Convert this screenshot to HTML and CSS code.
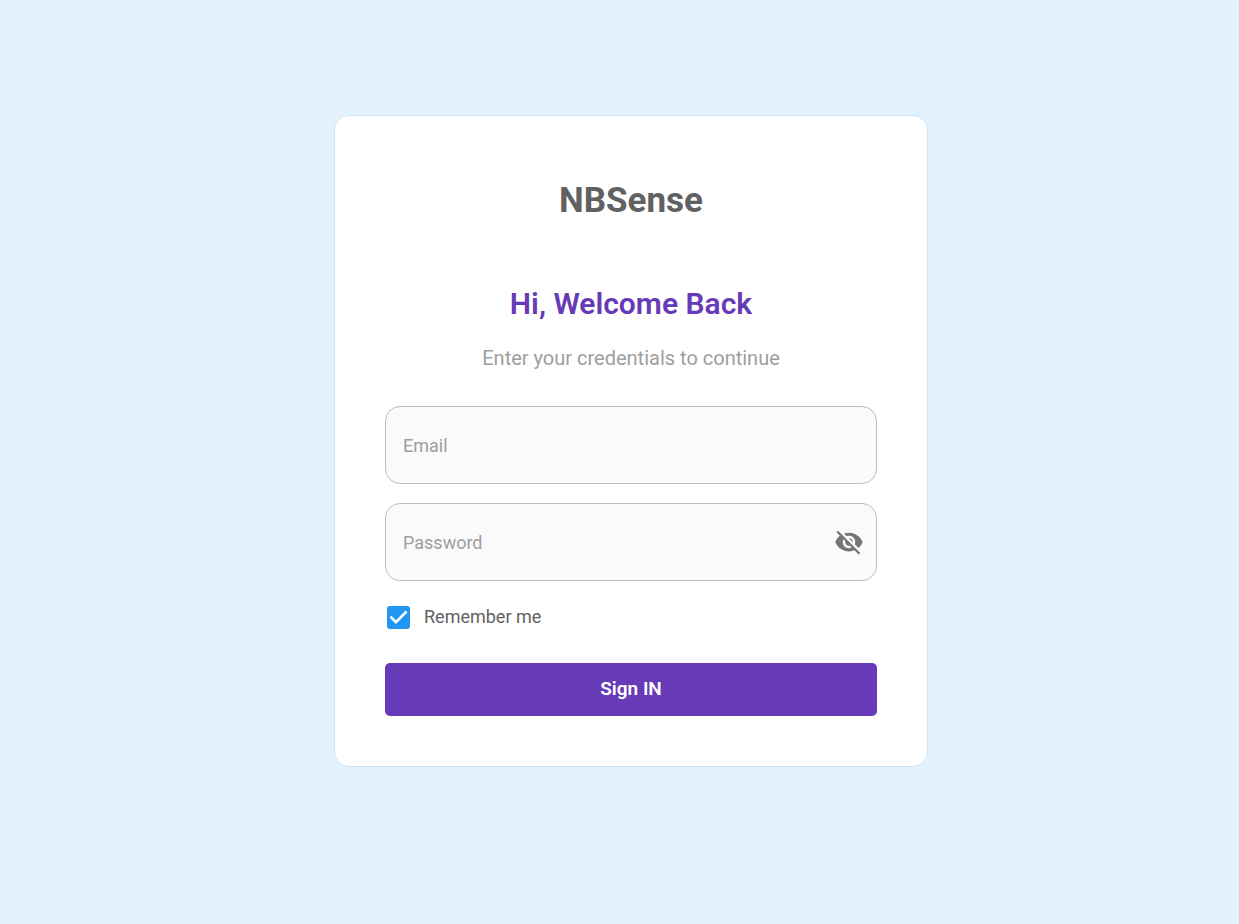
FILE: index.html
```
<!DOCTYPE html>
<html lang="en">
  <head>
    <meta charset="utf-8">
    <meta name="viewport" content="width=device-width, initial-scale=1">
    <title>NBSense</title>
    <link rel="stylesheet" href="styles.css">
  </head>

  <body>
    <main class="login-card">
      <h1>NBSense</h1>
      <h2>Hi, Welcome Back</h2>
      <p class="subtitle">Enter your credentials to continue</p>

      <form class="login-form">
        <div class="field">
          <input type="email" name="email" placeholder="Email" aria-label="Email">
        </div>

        <div class="field">
          <input type="password" name="password" placeholder="Password" aria-label="Password">
          <button type="button" class="toggle-password" aria-label="Toggle password visibility">
            <svg viewBox="0 0 24 24">
              <path d="M12 7c2.76 0 5 2.24 5 5 0 .65-.13 1.26-.36 1.83l2.92 2.92c1.51-1.26 2.7-2.89 3.43-4.75-1.73-4.39-6-7.5-11-7.5-1.4 0-2.74.25-3.98.7l2.16 2.16C10.74 7.13 11.35 7 12 7zM2 4.27l2.28 2.28.46.46C3.08 8.3 1.78 10.02 1 12c1.73 4.39 6 7.5 11 7.5 1.55 0 3.03-.3 4.38-.84l.42.42L19.73 22 21 20.73 3.27 3 2 4.27zM7.53 9.8l1.55 1.55c-.05.21-.08.43-.08.65 0 1.66 1.34 3 3 3 .22 0 .44-.03.65-.08l1.55 1.55c-.67.33-1.41.53-2.2.53-2.76 0-5-2.24-5-5 0-.79.2-1.53.53-2.2zm4.31-.78l3.15 3.15.02-.16c0-1.66-1.34-3-3-3l-.17.01z"/>
            </svg>
          </button>
        </div>

        <label class="remember">
          <input type="checkbox" name="remember" checked>
          Remember me
        </label>

        <button type="submit" class="sign-in">Sign IN</button>
      </form>
    </main>
  </body>
</html>
```

FILE: styles.css
```
* {
  box-sizing: border-box;
}

body {
  min-height: 100vh;
  margin: 0;
  padding: 0 0 42px 23px;
  background-color: #e3f2fd;
  color: #616161;
  font-family: Roboto, Arial, sans-serif;
  display: flex;
  align-items: center;
  justify-content: center;
}

.login-card {
  width: 100%;
  max-width: 594px;
  padding: 63px 50px 50px;
  background-color: #fff;
  border: 1px solid #cbe6fb;
  border-radius: 15px;
  text-align: center;
}

h1 {
  margin: 0 0 63px;
  font-size: 35px;
  line-height: 44px;
  font-weight: 700;
}

h2 {
  margin: 0 0 24px;
  color: #673ab7;
  font-size: 30px;
  line-height: 36px;
  font-weight: 600;
}

.subtitle {
  margin: 0 0 36px;
  color: #9e9e9e;
  font-size: 20px;
  line-height: 24px;
}

.login-form {
  display: flex;
  flex-direction: column;
}

.field {
  display: flex;
  align-items: center;
  height: 78px;
  margin-bottom: 19px;
  background-color: #fafafa;
  border: 1px solid #bdbdbd;
  border-radius: 15px;
}

.field input {
  flex: 1;
  min-width: 0;
  height: 100%;
  padding: 0 17px;
  border: none;
  outline: none;
  background: none;
  color: #616161;
  font-family: inherit;
  font-size: 18px;
}

.field input::placeholder {
  color: #9e9e9e;
}

.toggle-password {
  display: flex;
  margin-right: 12px;
  padding: 0;
  border: none;
  background: none;
  cursor: pointer;
}

.toggle-password svg {
  width: 30px;
  height: 30px;
  fill: #757575;
}

.remember {
  display: flex;
  align-items: center;
  gap: 14px;
  align-self: flex-start;
  margin: 5px 0 34px 2px;
  font-size: 18px;
  line-height: 24px;
  cursor: pointer;
}

.remember input {
  appearance: none;
  width: 23px;
  height: 23px;
  margin: 0;
  border-radius: 3px;
  border: 2px solid #616161;
  cursor: pointer;
}

.remember input:checked {
  border: none;
  background: #2196f3 url("data:image/svg+xml,%3Csvg xmlns='http://www.w3.org/2000/svg' viewBox='3 3 18 18'%3E%3Cpath fill='white' d='M10 17l-5-5 1.41-1.41L10 14.17l7.59-7.59L19 8l-9 9z'/%3E%3C/svg%3E") center / 100% no-repeat;
}

.sign-in {
  height: 53px;
  padding: 0 0 2px;
  border: none;
  border-radius: 5px;
  background-color: #673ab7;
  color: #fff;
  font-family: inherit;
  font-size: 19px;
  font-weight: 600;
  cursor: pointer;
}
```
